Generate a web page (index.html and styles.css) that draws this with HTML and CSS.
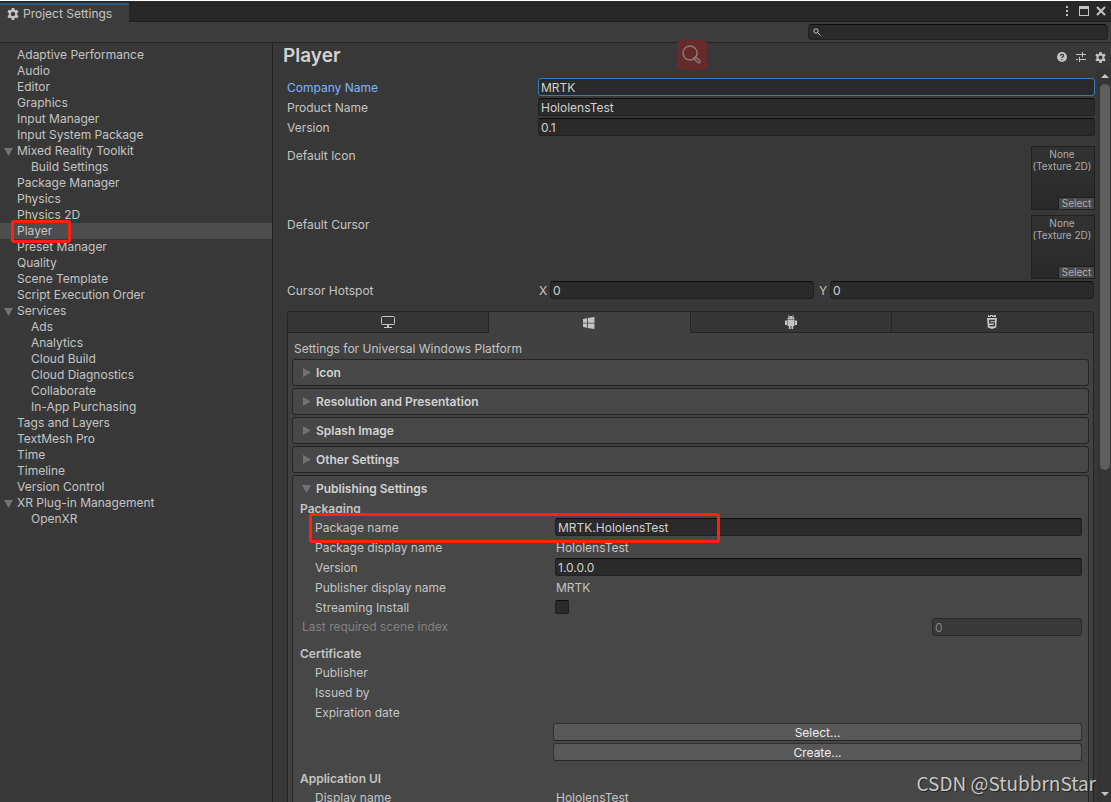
FILE: index.html
```html
<!DOCTYPE html>
<html lang="en">
<head>
<meta charset="utf-8">
<title>Project Settings</title>
<link rel="stylesheet" href="styles.css">
</head>
<body>
<div class="window">
  <header class="titlebar">
    <div class="tab">
      <svg class="tab-icon" viewBox="0 0 24 24" aria-hidden="true"><path class="fill" fill-rule="evenodd" d="M9.500 0h5l.7 3.600 2 1.100 3.400-1.200 2.500 4.300-2.700 2.400v3.600l2.700 2.400-2.500 4.300-3.400-1.200-2 1.100-.7 3.600h-5l-.7-3.600-2-1.100-3.400 1.200L.9 16.200l2.700-2.400v-3.600L.9 7.800l2.500-4.300 3.400 1.200 2-1.100zM12 7.500a4.500 4.500 0 1 0 0 9 4.500 4.500 0 0 0 0-9z"/></svg>
      <span>Project Settings</span>
    </div>
    <div class="window-buttons">
      <button class="icon-button" aria-label="Menu"><svg width="6" height="12" viewBox="0 0 6 12"><path class="fill" d="M0 1h2v2H0zM0 5h2v2H0zM0 9h2v2H0z"/></svg></button>
      <button class="icon-button" aria-label="Maximize"><svg width="10" height="10" viewBox="0 0 10 10"><path class="fill" fill-rule="evenodd" d="M0 0h10v10H0zM1 3v6h8V3z"/></svg></button>
      <button class="icon-button" aria-label="Close"><svg width="10" height="10" viewBox="0 0 10 10"><path class="line thick" d="M1 1l8 8M9 1l-8 8"/></svg></button>
    </div>
  </header>
  <div class="toolbar">
    <label class="search">
      <svg width="8" height="8" viewBox="0 0 8 8" aria-hidden="true"><circle class="line" cx="3" cy="3" r="2.200"/><path class="line" d="M4.600 4.600l3 3"/></svg>
      <input type="search" aria-label="Search settings">
    </label>
  </div>
  <div class="body">
    <nav class="sidebar">
      <a href="#">Adaptive Performance</a>
      <a href="#">Audio</a>
      <a href="#">Editor</a>
      <a href="#">Graphics</a>
      <a href="#">Input Manager</a>
      <a href="#">Input System Package</a>
      <a href="#" class="parent">Mixed Reality Toolkit</a>
      <a href="#" class="child">Build Settings</a>
      <a href="#">Package Manager</a>
      <a href="#">Physics</a>
      <a href="#">Physics 2D</a>
      <a href="#" class="selected">Player<span class="mark mark-nav"></span></a>
      <a href="#">Preset Manager</a>
      <a href="#">Quality</a>
      <a href="#">Scene Template</a>
      <a href="#">Script Execution Order</a>
      <a href="#" class="parent">Services</a>
      <a href="#" class="child">Ads</a>
      <a href="#" class="child">Analytics</a>
      <a href="#" class="child">Cloud Build</a>
      <a href="#" class="child">Cloud Diagnostics</a>
      <a href="#" class="child">Collaborate</a>
      <a href="#" class="child">In-App Purchasing</a>
      <a href="#">Tags and Layers</a>
      <a href="#">TextMesh Pro</a>
      <a href="#">Time</a>
      <a href="#">Timeline</a>
      <a href="#">Version Control</a>
      <a href="#" class="parent">XR Plug-in Management</a>
      <a href="#" class="child">OpenXR</a>
    </nav>
    <main class="main">
      <div class="main-header">
        <h1>Player</h1>
        <div class="header-buttons">
          <button class="icon-button" aria-label="Help"><svg width="10" height="10" viewBox="0 0 10 10"><circle class="fill" cx="5" cy="5" r="5"/><path class="cut" d="M3.400 3.800C3.400 1.800 6.600 1.800 6.600 3.800 6.600 4.800 5 4.900 5 6M5 7v1.200"/></svg></button>
          <button class="icon-button" aria-label="Presets"><svg width="10" height="10" viewBox="0 0 10 10"><path class="line" d="M0 2.500h6M7 2.500h3M6.500 0v5M0 7.500h2M4 7.500h6M3.500 5v5"/></svg></button>
          <button class="icon-button" aria-label="Settings"><svg width="11" height="11" viewBox="0 0 24 24"><path class="fill" fill-rule="evenodd" d="M9.500 0h5l.7 3.600 2 1.100 3.400-1.200 2.500 4.300-2.700 2.400v3.600l2.700 2.400-2.500 4.300-3.400-1.200-2 1.100-.7 3.600h-5l-.7-3.600-2-1.100-3.400 1.200L.9 16.200l2.700-2.400v-3.600L.9 7.800l2.500-4.300 3.400 1.200 2-1.100zM12 7.500a4.500 4.500 0 1 0 0 9 4.500 4.500 0 0 0 0-9z"/></svg></button>
        </div>
      </div>
      <div class="scroll-area">
        <div class="content">
          <div class="group">
            <div class="row"><label class="active" for="company">Company Name</label><input class="field focused" id="company" value="MRTK"></div>
            <div class="row"><label for="product">Product Name</label><input class="field" id="product" value="HololensTest"></div>
            <div class="row"><label for="version">Version</label><input class="field" id="version" value="0.1"></div>
          </div>
          <div class="texture-row"><span>Default Icon</span>
            <div class="texture"><span>None<br>(Texture 2D)</span><button>Select</button></div></div>
          <div class="texture-row"><span>Default Cursor</span>
            <div class="texture"><span>None<br>(Texture 2D)</span><button>Select</button></div></div>
          <div class="row hotspot"><span>Cursor Hotspot</span>
            <div class="vector">
              <label for="hot-x">X</label><input class="field" id="hot-x" value="0">
              <label for="hot-y">Y</label><input class="field" id="hot-y" value="0">
            </div>
          </div>

          <section class="platform">
            <div class="platform-tabs" role="tablist">
              <button role="tab" aria-label="Standalone"><svg width="14" height="12" viewBox="0 0 14 12"><rect class="line" x=".5" y=".5" width="13" height="8" rx="1"/><path class="fill" d="M6 9h2v2h3v1H3v-1h3z"/></svg></button>
              <button role="tab" aria-label="Universal Windows Platform" aria-selected="true" class="current"><svg width="12" height="12" viewBox="0 0 12 12"><path class="fill" d="M0 2l4-.7v4.400H0zM4.800 1.100L11.500 0v5.700H4.800zM0 6.400h4v4.400L0 10.100zM4.800 6.400h6.700V12l-6.700-1z"/></svg></button>
              <button role="tab" aria-label="Android"><svg width="12" height="14" viewBox="0 0 12 14"><path class="fill" fill-rule="evenodd" d="M2.500 4.300C2.500 2.800 3.200 2 4 1.500L3.200.3l.5-.3.900 1.200a4 4 0 0 1 2.800 0L8.300 0l.5.3L8 1.500c.8.500 1.500 1.300 1.500 2.800zM4.200 2.500v.8h.8v-.8zM7 2.500v.8h.8v-.8zM2.500 4.800h7V11h-1.300v3H6.500v-3h-1v3H3.800v-3H2.500zM0 5.500h2V10H0zM10 5.500h2V10h-2z"/></svg></button>
              <button role="tab" aria-label="WebGL"><svg width="10" height="14" viewBox="0 0 10 14"><path class="fill" d="M1 0h8v2H1zM0 3h10l-.8 9.500L5 14l-4.200-1.500z"/><path class="cut thin" d="M2.500 0v1M4.500 1v1M6.500 0v1"/><path class="cut" d="M8 5.500H2.700v2.400h4.600v2.800H2.500"/></svg></button>
            </div>
            <div class="platform-body">
              <p class="caption">Settings for Universal Windows Platform</p>
              <div class="foldout"><h2 class="closed">Icon</h2></div>
              <div class="foldout"><h2 class="closed">Resolution and Presentation</h2></div>
              <div class="foldout"><h2 class="closed">Splash Image</h2></div>
              <div class="foldout"><h2 class="closed">Other Settings</h2></div>
              <div class="foldout"><h2 class="open">Publishing Settings</h2>
                <div class="group publishing">
                  <h3>Packaging</h3>
                  <div class="row indent"><label for="package">Package name</label><input class="field" id="package" value="MRTK.HololensTest"><span class="mark mark-package"></span></div>
                  <div class="row indent"><span>Package display name</span><span class="value">HololensTest</span></div>
                  <div class="row indent"><label for="pversion">Version</label><input class="field" id="pversion" value="1.0.0.0"></div>
                  <div class="row indent"><span>Publisher display name</span><span class="value">MRTK</span></div>
                  <div class="row indent"><label for="streaming">Streaming Install</label><input class="check" type="checkbox" id="streaming"></div>
                  <div class="row disabled"><label for="scene">Last required scene index</label><input class="field short" id="scene" value="0" disabled></div>
                  <h3 class="spaced">Certificate</h3>
                  <div class="row indent"><span>Publisher</span></div>
                  <div class="row indent"><span>Issued by</span></div>
                  <div class="row indent"><span>Expiration date</span></div>
                  <button class="wide-button">Select...</button>
                  <button class="wide-button">Create...</button>
                  <h3 class="spaced">Application UI</h3>
                  <div class="row indent"><span>Display name</span><span class="value">HololensTest</span></div>
                </div>
              </div>
            </div>
          </section>
        </div>
        <div class="scrollbar" aria-hidden="true">
          <span class="arrow up"></span>
          <span class="track"><span class="thumb"></span></span>
          <span class="arrow down"></span>
        </div>
      </div>
    </main>
  </div>
  <div class="lens"><svg width="20" height="20" viewBox="0 0 20 20" aria-hidden="true"><circle cx="8" cy="8" r="7"/><path d="M11.500 13.500l1.800-1.800 4.500 3.800a1.300 1.300 0 0 1-1.900 1.900z"/></svg></div>
  <div class="watermark">CSDN @StubbrnStar</div>
</div>
</body>
</html>
```
FILE: styles.css
```css
* { box-sizing: border-box; }
body {
  margin: 0;
  background: #383838;
  color: #c4c4c4;
  font: 12px/16px Inter, "Liberation Sans", sans-serif;
}
h1, h2, h3, p { margin: 0; }
button, input { font: inherit; color: inherit; }
a { color: inherit; text-decoration: none; }
svg { display: block; }
.fill { fill: #c4c4c4; }
.line { fill: none; stroke: #c4c4c4; }
.thick { stroke-width: 2; }
.cut { fill: none; stroke: #383838; stroke-width: 1.3; }
.thin { stroke-width: 1; }

.window {
  position: relative;
  display: flex;
  flex-direction: column;
  height: 100vh;
  overflow: hidden;
  border-top: 1px solid #fff;
}
.titlebar {
  display: flex;
  justify-content: space-between;
  height: 21px;
  background: #282828;
  box-shadow: inset 0 -1px #202020;
}
.tab {
  display: flex;
  align-items: center;
  gap: 4px;
  margin-top: 2px;
  padding: 0 17px 0 7px;
  background: #3c3c3c;
  border-top: 2px solid #2c5d87;
}
.tab-icon { width: 12px; height: 12px; }
.window-buttons, .header-buttons { display: flex; align-items: center; }
.window-buttons { gap: 7px; padding: 0 5px 2px 0; }
.icon-button { padding: 0; border: 0; background: none; }
.toolbar {
  display: flex;
  justify-content: flex-end;
  height: 21px;
  padding: 2px 3px;
  background: #3c3c3c;
  border-bottom: 1px solid #232323;
}
.search {
  display: flex;
  align-items: center;
  gap: 4px;
  width: 300px;
  height: 16px;
  padding-left: 4px;
  background: #2a2a2a;
  border: 1px solid #212121;
  border-top-color: #0d0d0d;
  border-radius: 4px;
}
.search input { flex: 1; min-width: 0; height: 14px; border: 0; outline: 0; background: none; }

.body { display: flex; flex: 1; min-height: 0; }
.sidebar {
  display: flex;
  flex-direction: column;
  flex: 0 0 273px;
  padding-top: 4px;
  border-right: 1px solid #232323;
}
.sidebar a { position: relative; padding-left: 17px; }
.sidebar .child { padding-left: 31px; }
.sidebar .selected { background: #4d4d4d; }
.parent::before, .open::before, .closed::before {
  content: "";
  position: absolute;
  background: #727272;
}
.parent::before {
  left: 4px;
  top: 5px;
  width: 9px;
  height: 8px;
  clip-path: polygon(0 0, 100% 0, 50% 100%);
}
.mark { position: absolute; border: 3px solid #ff2010; border-radius: 3px; pointer-events: none; z-index: 2; }
.mark-nav { left: 11px; top: -3px; width: 60px; height: 23px; }
.mark-package { left: -6px; top: -5px; width: 411px; height: 30px; }

.main { display: flex; flex-direction: column; flex: 1; min-width: 0; }
.main-header { display: flex; justify-content: space-between; height: 25px; padding: 0 5px 0 10px; }
h1 { font-size: 19px; line-height: 26px; font-weight: 600; color: #d2d2d2; }
.header-buttons { gap: 9px; padding-top: 3px; }
.scroll-area { display: flex; flex: 1; min-height: 0; }
.content { flex: 1; min-width: 0; padding: 10px 3px 0 14px; overflow: hidden; }
.group { display: flex; flex-direction: column; gap: 2px; }
.row { position: relative; display: flex; height: 18px; line-height: 20px; }
.row > :first-child { flex: 0 0 251px; }
.active { color: #81b4ff; }
.field {
  flex: 1;
  min-width: 0;
  height: 18px;
  padding: 1px 2px 0;
  background: #2a2a2a;
  border: 1px solid #212121;
  border-top-color: #0d0d0d;
  border-radius: 3px;
  outline: 0;
  line-height: 15px;
  color: #d2d2d2;
}
.focused { border-color: #3a79bb; }
.texture-row { display: flex; justify-content: space-between; height: 64px; margin-top: 5px; line-height: 20px; }
.group + .texture-row { margin-top: 10px; }
.texture {
  display: flex;
  flex-direction: column;
  justify-content: space-between;
  width: 64px;
  border: 1px solid #202020;
  background: linear-gradient(#323232, #292929);
  font-size: 10px;
  line-height: 12px;
  text-align: center;
  white-space: nowrap;
  color: #acacac;
}
.texture span { padding: 1px 2px 0 0; }
.texture button {
  align-self: flex-end;
  width: 36px;
  height: 12px;
  padding: 0;
  border: 1px solid #202020;
  border-width: 1px 0 0 1px;
  background: #484848;
  line-height: 11px;
}
.hotspot { margin-top: 2px; padding-right: 1px; }
.vector { display: flex; flex: 1; min-width: 0; }
.vector label { flex: 0 0 12px; padding-left: 1px; }
.vector label:nth-of-type(2) { flex-basis: 16px; padding-left: 5px; }

.platform { margin: 12px 1px 0 0; border: 1px solid #242424; border-radius: 3px; background: #414141; }
.platform-tabs { display: grid; grid-template-columns: repeat(4, 1fr); height: 21px; }
.platform-tabs button {
  display: grid;
  place-items: center;
  padding: 0;
  background: #353535;
  border: 0 solid #242424;
  border-width: 0 1px 1px 0;
}
.platform-tabs button:last-child { border-right-width: 0; }
.platform-tabs .current { background: #414141; border-bottom-width: 0; }
.platform-body { display: flex; flex-direction: column; gap: 2px; padding: 8px 4px; }
.caption { padding-left: 2px; height: 16px; }
.foldout { border: 1px solid #242424; border-radius: 3px; background: #474747; }
h2 { position: relative; padding-left: 23px; font-size: 12px; line-height: 25px; font-weight: 600; color: #d2d2d2; }
.closed::before { left: 10px; top: 8px; width: 8px; height: 9px; clip-path: polygon(0 0, 100% 50%, 0 100%); }
.open::before { left: 9px; top: 9px; width: 9px; height: 8px; clip-path: polygon(0 0, 100% 0, 50% 100%); }
.publishing { padding: 0 6px 20px 7px; }
h3 { height: 15px; font-size: 12px; line-height: 16px; font-weight: 600; color: #c4c4c4; }
.indent { margin-left: 15px; }
.indent > :first-child { flex-basis: 240px; }
.value { padding-left: 1px; }
.check {
  appearance: none;
  width: 14px;
  height: 14px;
  margin: 2px 0;
  background: #2a2a2a;
  border: 1px solid #212121;
  border-top-color: #0d0d0d;
  border-radius: 2px;
}
.disabled { justify-content: space-between; padding-left: 2px; line-height: 18px; color: #828282; }
.disabled .short { flex: 0 0 150px; background: #393939; border-color: #2a2a2a; color: #828282; }
.spaced { margin-top: 8px; }
.wide-button {
  height: 18px;
  margin-left: 253px;
  padding: 1px 0 0;
  border: 1px solid #303030;
  border-bottom-color: #242424;
  border-radius: 3px;
  background: #585858;
  line-height: 16px;
  color: #eee;
}

.scrollbar { display: flex; flex-direction: column; align-items: center; width: 13px; background: #353535; border-left: 1px solid #303030; }
.arrow { width: 8px; height: 4px; background: #c4c4c4; }
.up { margin: 6px 0; clip-path: polygon(50% 0, 100% 100%, 0 100%); }
.down { margin: 6px 0; clip-path: polygon(0 0, 100% 0, 50% 100%); }
.track { flex: 1; width: 10px; }
.thumb { display: block; height: 55%; border-radius: 5px; background: #5f5f5f; }

.lens {
  position: absolute;
  left: 677px;
  top: 39px;
  display: grid;
  place-items: center;
  width: 30px;
  height: 30px;
  border-radius: 4px;
  background: #652a2a;
}
.lens svg { fill: none; stroke: #8c7474; stroke-width: 1.5; }
.watermark {
  position: absolute;
  right: 15px;
  bottom: 7px;
  font: 19px/24px "Noto Sans CJK SC", sans-serif;
  color: #c8c8c8;
  text-shadow: 1px 1px 1px #222;
}
```
